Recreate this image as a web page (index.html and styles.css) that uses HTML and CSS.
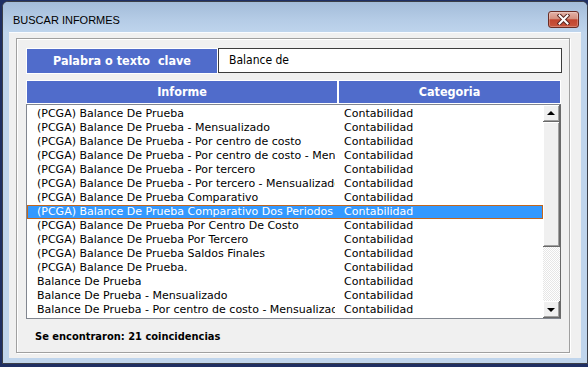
FILE: index.html
```html
<!DOCTYPE html>
<html lang="es">
<head>
    <meta charset="UTF-8">
    <title>Buscar Informes</title>
    <link rel="stylesheet" href="styles.css">
</head>
<body>
    <div class="window">
        <div class="titlebar">
            <span class="title">BUSCAR INFORMES</span>
            <button class="close-btn" aria-label="Cerrar">
                <svg width="13" height="11" viewBox="0 0 13 11">
                    <path d="M2.5 1.5 L10.5 9.5 M10.5 1.5 L2.5 9.5" stroke="#5a2520" stroke-width="4" stroke-linecap="square"/>
                    <path d="M2.5 1.5 L10.5 9.5 M10.5 1.5 L2.5 9.5" stroke="#fff" stroke-width="2" stroke-linecap="square"/>
                </svg>
            </button>
        </div>

        <div class="client">
            <div class="frame">
                <div class="search-row">
                    <div class="search-label">Palabra o texto&nbsp; clave</div>
                    <div class="search-input">Balance de</div>
                </div>

                <div class="list-head">
                    <div class="head-informe">Informe</div>
                    <div class="head-categoria">Categoria</div>
                </div>

                <div class="list">
                    <ul class="rows">
                        <li><span class="c1">(PCGA) Balance De Prueba</span><span class="c2">Contabilidad</span></li>
                        <li><span class="c1">(PCGA) Balance De Prueba - Mensualizado</span><span class="c2">Contabilidad</span></li>
                        <li><span class="c1">(PCGA) Balance De Prueba - Por centro de costo</span><span class="c2">Contabilidad</span></li>
                        <li><span class="c1">(PCGA) Balance De Prueba - Por centro de costo - Mensualizado</span><span class="c2">Contabilidad</span></li>
                        <li><span class="c1">(PCGA) Balance De Prueba - Por tercero</span><span class="c2">Contabilidad</span></li>
                        <li><span class="c1">(PCGA) Balance De Prueba - Por tercero - Mensualizado</span><span class="c2">Contabilidad</span></li>
                        <li><span class="c1">(PCGA) Balance De Prueba Comparativo</span><span class="c2">Contabilidad</span></li>
                        <li class="selected"><span class="c1">(PCGA) Balance De Prueba Comparativo Dos Periodos</span><span class="c2">Contabilidad</span></li>
                        <li><span class="c1">(PCGA) Balance De Prueba Por Centro De Costo</span><span class="c2">Contabilidad</span></li>
                        <li><span class="c1">(PCGA) Balance De Prueba Por Tercero</span><span class="c2">Contabilidad</span></li>
                        <li><span class="c1">(PCGA) Balance De Prueba Saldos Finales</span><span class="c2">Contabilidad</span></li>
                        <li><span class="c1">(PCGA) Balance De Prueba.</span><span class="c2">Contabilidad</span></li>
                        <li><span class="c1">Balance De Prueba</span><span class="c2">Contabilidad</span></li>
                        <li><span class="c1">Balance De Prueba - Mensualizado</span><span class="c2">Contabilidad</span></li>
                        <li><span class="c1">Balance De Prueba - Por centro de costo - Mensualizado</span><span class="c2">Contabilidad</span></li>
                    </ul>
                    <div class="scrollbar">
                        <div class="sb-btn"><span class="arrow-up"></span></div>
                        <div class="sb-thumb"></div>
                        <div class="sb-track"></div>
                        <div class="sb-btn"><span class="arrow-down"></span></div>
                    </div>
                </div>

                <div class="status">Se encontraron: 21 coincidencias</div>
            </div>
        </div>
    </div>
</body>
</html>
```

FILE: styles.css
```css
html, body {
    margin: 0;
    padding: 0;
}

body {
    width: 588px;
    height: 367px;
    background: #1f2f63;
    overflow: hidden;
    font-family: "DejaVu Sans Condensed", "DejaVu Sans", sans-serif;
    font-stretch: condensed;
}

.window {
    box-sizing: border-box;
    width: 586px;
    height: 363px;
    margin: 1px 0 0 2px;
    border: 1px solid #3b3f48;
    border-radius: 6px 6px 0 0;
    background: #c0d5ec;
    overflow: hidden;
}

.titlebar {
    box-sizing: border-box;
    height: 30px;
    padding: 5px 8px 0 10px;
    display: flex;
    align-items: center;
    justify-content: space-between;
    background: linear-gradient(#a3bcd9, #b5cce6 60%, #bed4ec);
}

.title {
    font-family: "Liberation Sans", Arial, sans-serif;
    font-stretch: normal;
    font-size: 11px;
    color: #000;
}

.close-btn {
    width: 31px;
    height: 17px;
    padding: 0;
    border: 1px solid #6a2d25;
    border-radius: 3px;
    background: linear-gradient(#e3b2a8, #d4907f 45%, #c2452f 52%, #c9573f);
    box-shadow: inset 0 0 0 1px rgba(255, 255, 255, 0.25);
    display: flex;
    align-items: center;
    justify-content: center;
}

.client {
    box-sizing: border-box;
    width: 572px;
    height: 326px;
    margin: 0 6px;
    padding: 6px 11px 5px 7px;
    background: #f0f0f0;
    border-top: 1px solid #fafcff;
}

.frame {
    box-sizing: border-box;
    width: 554px;
    height: 315px;
    margin-top: -1px;
    padding: 9px 0 0 9px;
    border: 1px solid #a0a0a0;
    box-shadow: inset 1px 1px 0 #fff, 1px 1px 0 #fff;
}

/* search row */
.search-row {
    display: flex;
    height: 26px;
}

.search-label {
    box-sizing: border-box;
    width: 192px;
    height: 26px;
    border: 1px solid #fff;
    background: #506ccb;
    color: #fff;
    font-weight: bold;
    font-size: 12.5px;
    line-height: 24px;
    text-align: center;
    white-space: pre;
}

.search-input {
    box-sizing: border-box;
    width: 344px;
    height: 25px;
    border: 1px solid #3c3c3c;
    background: #fff;
    padding-left: 10px;
    font-size: 12px;
    line-height: 23px;
    color: #000;
}

/* list header */
.list-head {
    box-sizing: border-box;
    display: flex;
    gap: 2px;
    width: 535px;
    height: 24px;
    margin-top: 6px;
    padding: 1px;
    background: #fff;
}

.head-informe,
.head-categoria {
    background: #506ccb;
    color: #fff;
    font-weight: bold;
    font-size: 12.5px;
    line-height: 22px;
    text-align: center;
}

.head-informe {
    width: 310px;
}

.head-categoria {
    width: 221px;
}

/* list box */
.list {
    box-sizing: border-box;
    display: flex;
    width: 535px;
    height: 215px;
    border: 1px solid #828790;
    border-right-color: #696969;
    background: #fff;
}

.rows {
    flex: 1;
    list-style: none;
    margin: 0;
    padding: 2px 0 0 0;
    overflow: hidden;
}

.rows li {
    display: flex;
    height: 14px;
    padding-left: 10px;
    font-family: "DejaVu Sans", sans-serif;
    font-stretch: normal;
    font-size: 11px;
    line-height: 14px;
    color: #000;
    white-space: nowrap;
}

.rows li.selected {
    background: #3399ff;
    color: #fff;
    box-shadow: inset 0 0 0 1px #c0661e;
}

.c1 {
    width: 298px;
    margin-right: 9px;
    overflow: hidden;
    text-overflow: clip;
}

.scrollbar {
    width: 17px;
    display: flex;
    flex-direction: column;
}

.sb-btn,
.sb-thumb {
    box-sizing: border-box;
    background: #f0f0f0;
    border-right: 1px solid #696969;
    border-bottom: 1px solid #696969;
    box-shadow: inset 1px 1px 0 #fff, inset -1px -1px 0 #a0a0a0;
}

.sb-btn {
    height: 17px;
    display: flex;
    align-items: center;
    justify-content: center;
}

.sb-thumb {
    height: 125px;
}

.sb-track {
    flex: 1;
    background: repeating-conic-gradient(#fff 0 25%, #e6e6e6 0 50%) 0 0 / 2px 2px;
}

.arrow-up,
.arrow-down {
    width: 0;
    height: 0;
    border-left: 4px solid transparent;
    border-right: 4px solid transparent;
}

.arrow-up {
    border-bottom: 4px solid #000;
    margin-top: -1px;
}

.arrow-down {
    border-top: 4px solid #000;
    margin-top: 1px;
}

.status {
    margin: 11px 0 0 9px;
    font-size: 11px;
    font-weight: bold;
    color: #000;
}
```
